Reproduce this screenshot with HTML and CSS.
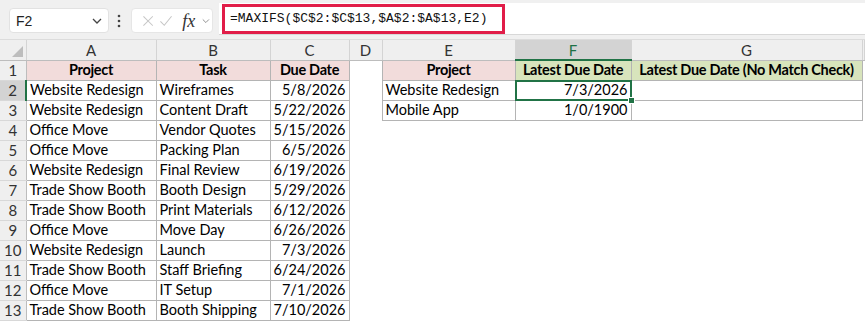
FILE: index.html
```html
<!DOCTYPE html>
<html lang="en">
<head>
    <meta charset="UTF-8">
    <title>Latest Due Date - MAXIFS</title>
    <link rel="stylesheet" href="styles.css">
</head>
<body>
    <div class="formula-bar">
        <div class="name-box">
            <span>F2</span>
            <svg class="chev" width="10" height="6" viewBox="0 0 10 6"><polyline points="1,1 5,5 9,1" fill="none" stroke="#444" stroke-width="1.3"/></svg>
        </div>
        <svg class="grip" width="4" height="14" viewBox="0 0 4 14"><circle cx="2" cy="2" r="1.3" fill="#444"/><circle cx="2" cy="7" r="1.3" fill="#444"/><circle cx="2" cy="12" r="1.3" fill="#444"/></svg>
        <div class="fx-box">
            <svg width="12" height="12" viewBox="0 0 12 12"><line x1="0.5" y1="0.5" x2="11.5" y2="11.5" stroke="#c6c6c6" stroke-width="1.2"/><line x1="11.5" y1="0.5" x2="0.5" y2="11.5" stroke="#c6c6c6" stroke-width="1.2"/></svg>
            <svg width="14" height="12" viewBox="0 0 14 12"><polyline points="0.5,6.5 5,11 13.5,0.5" fill="none" stroke="#c6c6c6" stroke-width="1.2"/></svg>
            <span class="fx">fx</span>
            <svg class="chev" width="9" height="6" viewBox="0 0 10 6"><polyline points="1,1 5,5 9,1" fill="none" stroke="#888" stroke-width="1.2"/></svg>
        </div>
        <div class="formula">
            <div class="formula-input">=MAXIFS($C$2:$C$13,$A$2:$A$13,E2)</div>
        </div>
    </div>

    <table class="sheet">
        <colgroup>
            <col style="width:26px"><col style="width:130px"><col style="width:114px"><col style="width:79px">
            <col style="width:33px"><col style="width:133px"><col style="width:116px"><col style="width:231px"><col>
        </colgroup>
        <tr class="col-heads">
            <th class="corner"></th><th>A</th><th>B</th><th>C</th><th>D</th><th>E</th><th class="active">F</th><th>G</th><th></th>
        </tr>
        <tr>
            <th class="row-head">1</th>
            <td class="hd pink">Project</td><td class="hd pink">Task</td><td class="hd pink">Due Date</td><td></td>
            <td class="hd pink">Project</td><td class="hd green">Latest Due Date</td><td class="hd green">Latest Due Date (No Match Check)</td><td></td>
        </tr>
        <tr>
            <th class="row-head active">2</th>
            <td class="b">Website Redesign</td><td class="b">Wireframes</td><td class="b num">5/8/2026</td><td></td>
            <td class="b">Website Redesign</td><td class="b num sel">7/3/2026</td><td class="b"></td><td></td>
        </tr>
        <tr>
            <th class="row-head">3</th>
            <td class="b">Website Redesign</td><td class="b">Content Draft</td><td class="b num">5/22/2026</td><td></td>
            <td class="b">Mobile App</td><td class="b num">1/0/1900</td><td class="b"></td><td></td>
        </tr>
        <tr><th class="row-head">4</th><td class="b">Office Move</td><td class="b">Vendor Quotes</td><td class="b num">5/15/2026</td><td colspan="5"></td></tr>
        <tr><th class="row-head">5</th><td class="b">Office Move</td><td class="b">Packing Plan</td><td class="b num">6/5/2026</td><td colspan="5"></td></tr>
        <tr><th class="row-head">6</th><td class="b">Website Redesign</td><td class="b">Final Review</td><td class="b num">6/19/2026</td><td colspan="5"></td></tr>
        <tr><th class="row-head">7</th><td class="b">Trade Show Booth</td><td class="b">Booth Design</td><td class="b num">5/29/2026</td><td colspan="5"></td></tr>
        <tr><th class="row-head">8</th><td class="b">Trade Show Booth</td><td class="b">Print Materials</td><td class="b num">6/12/2026</td><td colspan="5"></td></tr>
        <tr><th class="row-head">9</th><td class="b">Office Move</td><td class="b">Move Day</td><td class="b num">6/26/2026</td><td colspan="5"></td></tr>
        <tr><th class="row-head">10</th><td class="b">Website Redesign</td><td class="b">Launch</td><td class="b num">7/3/2026</td><td colspan="5"></td></tr>
        <tr><th class="row-head">11</th><td class="b">Trade Show Booth</td><td class="b">Staff Briefing</td><td class="b num">6/24/2026</td><td colspan="5"></td></tr>
        <tr><th class="row-head">12</th><td class="b">Office Move</td><td class="b">IT Setup</td><td class="b num">7/1/2026</td><td colspan="5"></td></tr>
        <tr><th class="row-head">13</th><td class="b">Trade Show Booth</td><td class="b">Booth Shipping</td><td class="b num">7/10/2026</td><td colspan="5"></td></tr>
    </table>
</body>
</html>
```

FILE: styles.css
```css
body { margin: 0; background: #fff; font-family: "Lato", "Liberation Sans", sans-serif; color: #000; overflow: hidden; }

/* formula bar */
.formula-bar { display: flex; align-items: flex-start; height: 40px; box-sizing: border-box; background: #f0f0f0; padding-left: 9px; border-bottom: 1px solid #dcdcdc; }
.name-box { display: flex; align-items: center; justify-content: space-between; width: 100px; height: 25px; margin-top: 8px; box-sizing: border-box; padding: 0 6px 0 6px; background: #fff; border: 1px solid #e2e2e2; border-radius: 4px; font-family: "Liberation Sans", sans-serif; font-size: 14px; color: #222; }
.grip { margin: 14px 10px 0 8px; }
.fx-box { display: flex; align-items: center; gap: 7px; width: 82px; height: 25px; margin-top: 8px; box-sizing: border-box; padding: 0 2px 0 11px; background: #fff; border: 1px solid #e6e6e6; border-radius: 4px; }
.fx { font-family: "Liberation Serif", serif; font-style: italic; font-size: 18px; color: #333; margin-left: 3px; line-height: 1; }
.formula { flex: 1; height: 31px; margin: 3px 0 0 6px; padding-left: 3px; background: #fff; border-bottom: 1px solid #d8d8d8; }
.formula-input { width: 283px; height: 30px; margin-top: 1px; box-sizing: border-box; border: 3px solid #e11d48; padding: 0 0 0 5px; font-family: "Liberation Mono", monospace; font-size: 13px; line-height: 24px; color: #111; }

/* grid */
.sheet { border-collapse: collapse; table-layout: fixed; width: 865px; font-size: 14.5px; }
.sheet tr { height: 20px; }
.sheet th, .sheet td { padding: 0 3px; line-height: 18px; white-space: nowrap; overflow: visible; }
.col-heads th { background: #efefef; font-weight: normal; font-size: 15px; color: #333; text-align: center; border-right: 1px solid #d4d4d4; border-bottom: 1px solid #bdbdbd; }
.col-heads th.active { background: #d3d3d3; color: #1e7145; border-bottom: 2px solid #217346; }
.corner { position: relative; }
.corner::after { content: ""; position: absolute; right: 3px; bottom: 3px; border-style: solid; border-width: 0 0 11px 11px; border-color: transparent transparent #bdbdbd transparent; }
.row-head { background: #efefef; font-weight: normal; font-size: 15px; color: #333; text-align: center; padding: 0; border-right: 1px solid #bdbdbd; border-bottom: 1px solid #d8d8d8; }
.row-head.active { background: #d3d3d3; border-right: 2px solid #217346; }

.b { border: 1px solid #b4b4b4; }
.hd { border: 1px solid #b4b4b4; font-weight: bold; text-align: center; letter-spacing: -0.3px; }
.pink { background: #f2dcdb; }
.green { background: #d8e4bc; }
.num { text-align: right; }
.sel { position: relative; }
.sel::after { content: ""; position: absolute; left: -1px; top: -1px; right: -1px; bottom: -1px; border: 2px solid #217346; }
.sel::before { content: ""; position: absolute; right: -4px; bottom: -4px; width: 5px; height: 5px; background: #217346; border: 1px solid #fff; z-index: 1; }
```
